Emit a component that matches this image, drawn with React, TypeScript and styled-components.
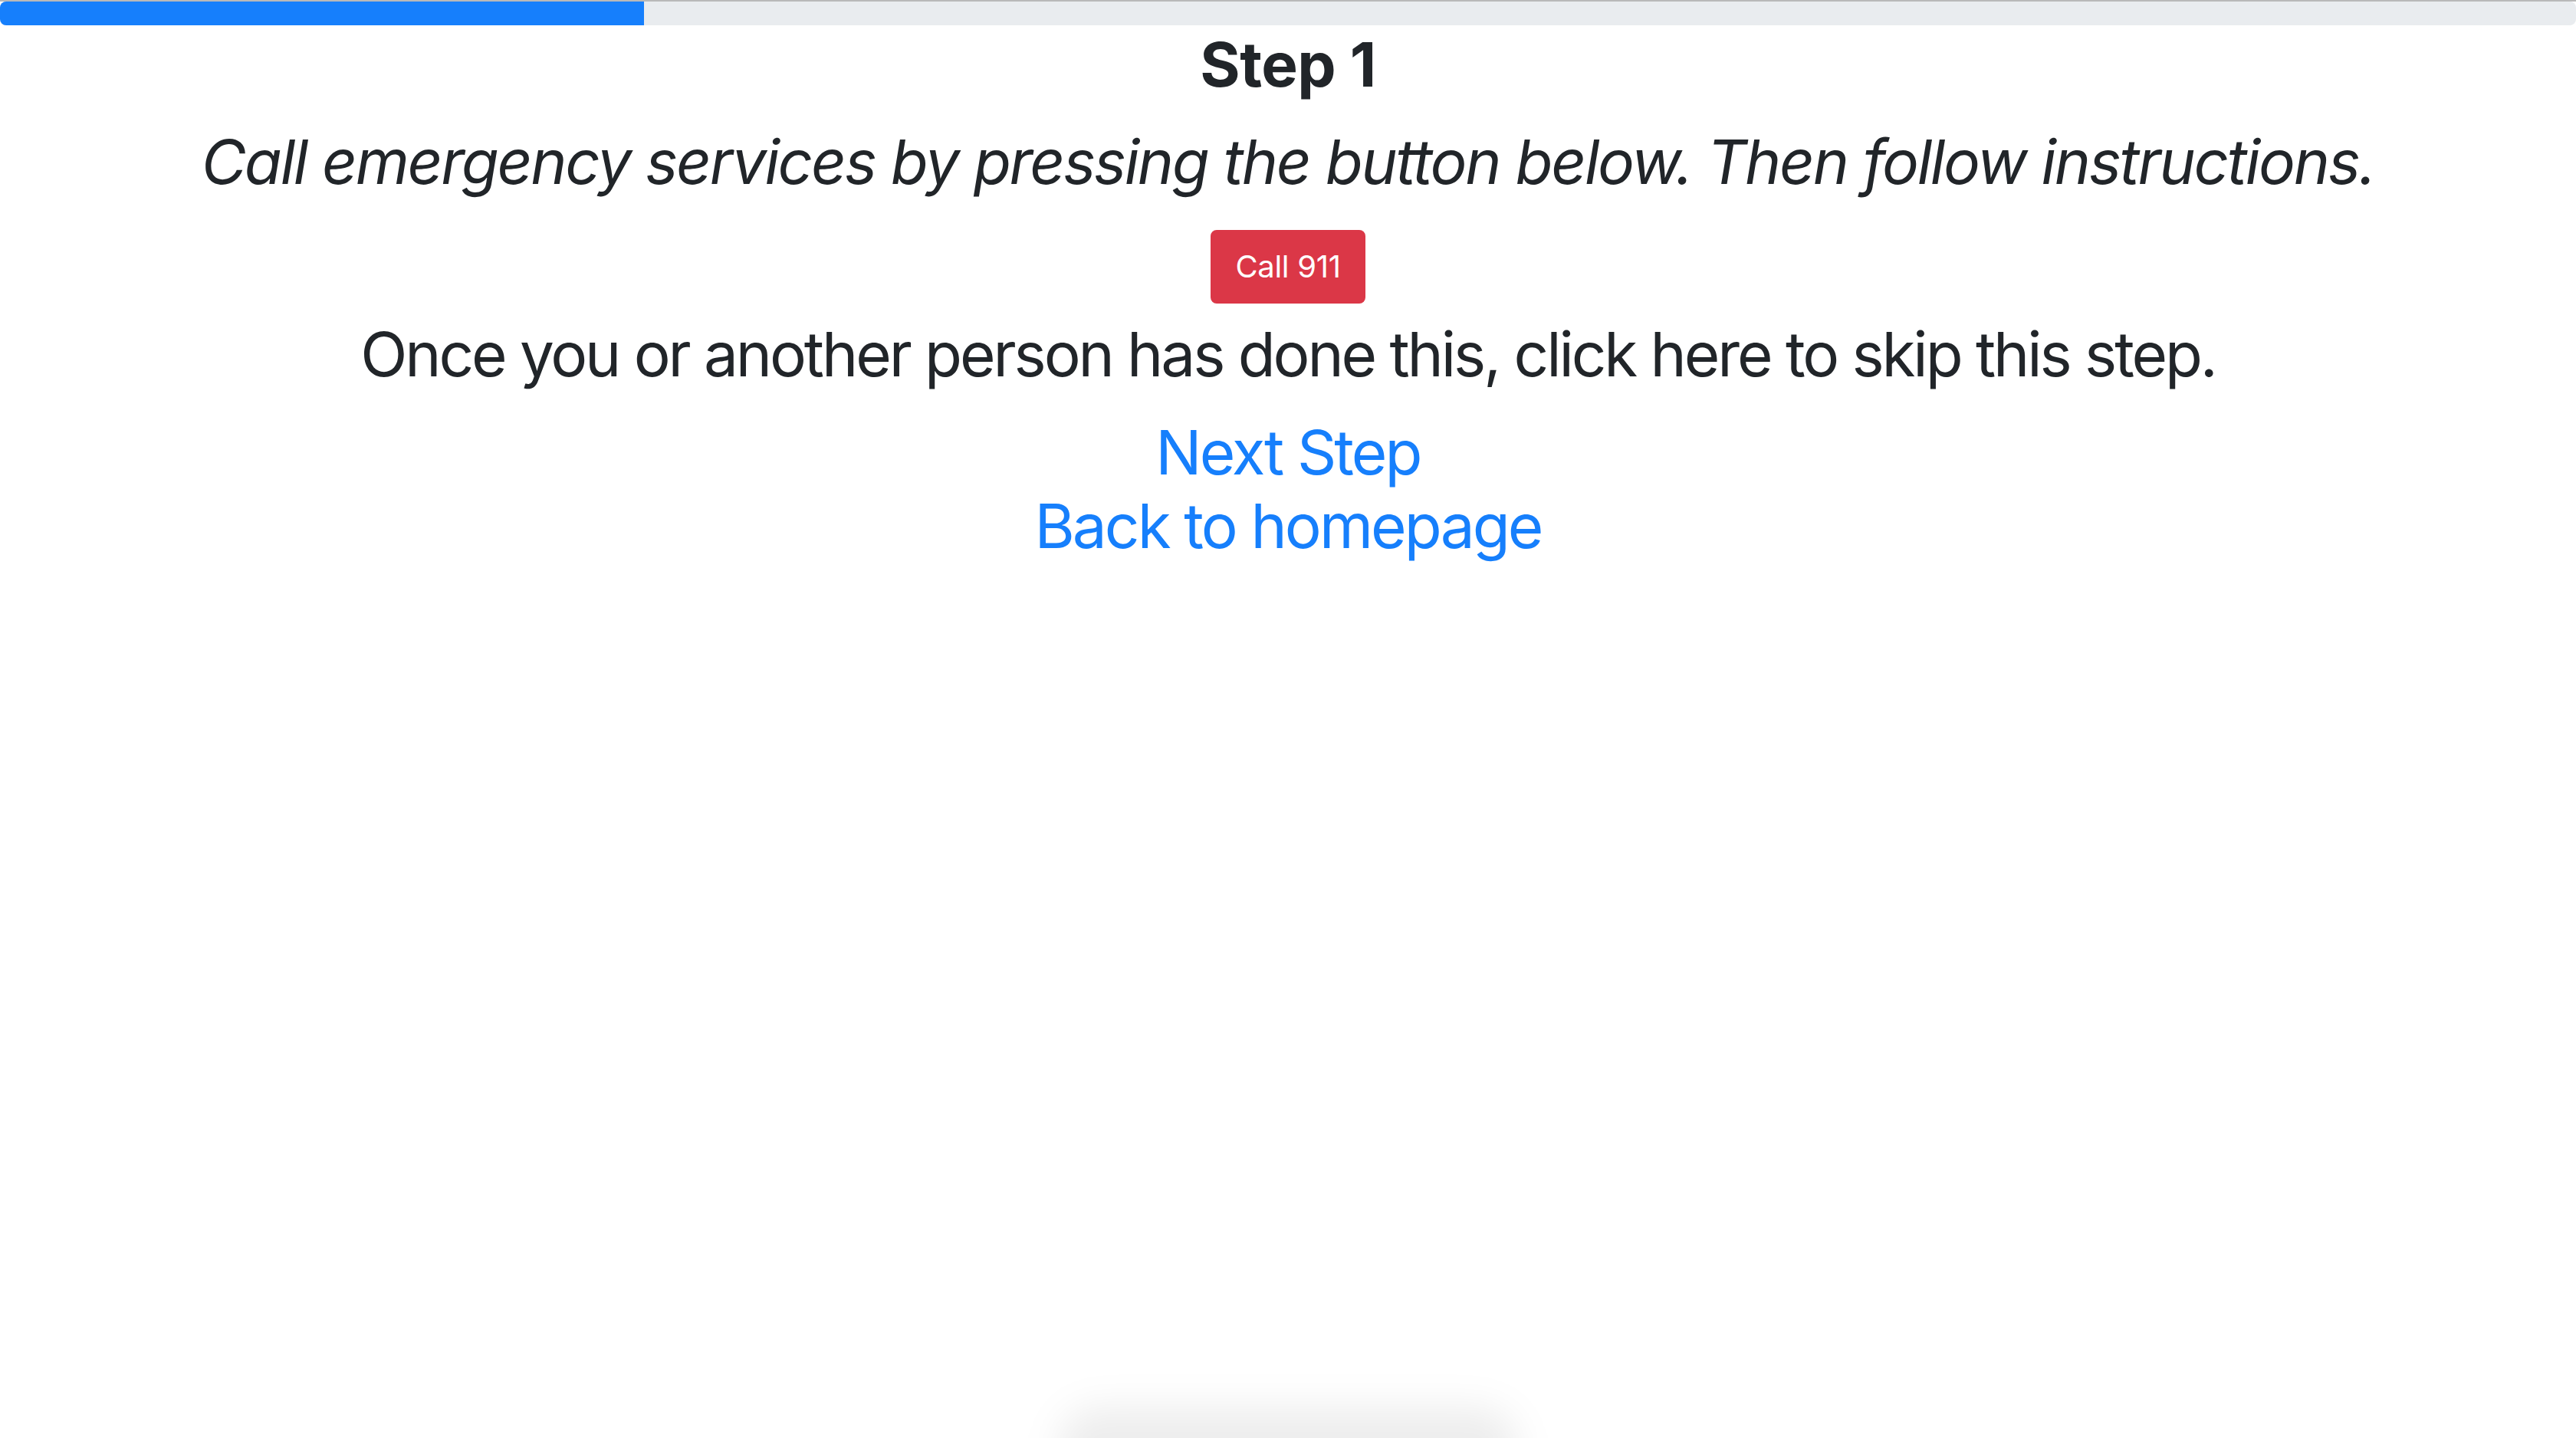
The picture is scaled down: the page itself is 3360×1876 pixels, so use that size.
import React from 'react'
import styled, { createGlobalStyle } from 'styled-components'

const GlobalStyle = createGlobalStyle`
  html, body {
    margin: 0;
    padding: 0;
    background: #ffffff;
  }
  body {
    font-family: Inter, "Noto Sans", "Liberation Sans", sans-serif;
    color: #212529;
    border-top: 2px solid #b9b9b9;
    min-height: 100vh;
    box-sizing: border-box;
  }
`

const Progress = styled.div`
  display: flex;
  height: 31px;
  overflow: hidden;
  background-color: #e9ecef;
  border-radius: 8px;
`

const ProgressFill = styled.div`
  height: 100%;
  background-color: #167ffc;
`

const Main = styled.main`
  display: flex;
  flex-direction: column;
  align-items: center;
  text-align: center;
`

const Title = styled.h2`
  margin: 3px 0 0;
  font-size: 80px;
  line-height: 96px;
  font-weight: 700;
  letter-spacing: -0.5px;
`

const Lead = styled.h2`
  margin: 31px 0 0;
  font-size: 80px;
  line-height: 96px;
  font-weight: 400;
  font-style: italic;
  letter-spacing: -2.3px;
`

const CallButton = styled.a`
  display: inline-block;
  margin-top: 41px;
  padding: 16px 30px;
  border: 2px solid #db3747;
  border-radius: 8px;
  background-color: #db3747;
  color: #ffffff;
  font-size: 40px;
  line-height: 60px;
  letter-spacing: -0.3px;
  text-decoration: none;
  cursor: pointer;
`

const Note = styled.h2`
  margin: 18px 0 0;
  font-size: 80px;
  line-height: 96px;
  font-weight: 400;
  letter-spacing: -3.1px;
`

const Links = styled.div`
  display: flex;
  flex-direction: column;
  align-items: center;
  margin-top: 32px;
`

const NavLink = styled.a`
  font-size: 80px;
  line-height: 96px;
  letter-spacing: -2.9px;
  color: #167ffc;
  text-decoration: none;
`

const DockShadow = styled.div`
  position: fixed;
  left: 50%;
  bottom: -70px;
  width: 600px;
  height: 110px;
  transform: translateX(-50%);
  border-radius: 60px;
  background: rgba(0, 0, 0, 0.07);
  filter: blur(24px);
  pointer-events: none;
`

const App = () => {
  const step = 1
  const total = 4
  return (
    <>
      <GlobalStyle />
      <Progress>
        <ProgressFill style={{ width: `${(step / total) * 100}%` }} />
      </Progress>
      <Main>
        <Title>Step {step}</Title>
        <Lead>Call emergency services by pressing the button below. Then follow instructions.</Lead>
        <CallButton href="tel:911">Call 911</CallButton>
        <Note>Once you or another person has done this, click here to skip this step.</Note>
        <Links>
          <NavLink href="#">Next Step</NavLink>
          <NavLink href="#">Back to homepage</NavLink>
        </Links>
      </Main>
      <DockShadow />
    </>
  )
}

export default App
